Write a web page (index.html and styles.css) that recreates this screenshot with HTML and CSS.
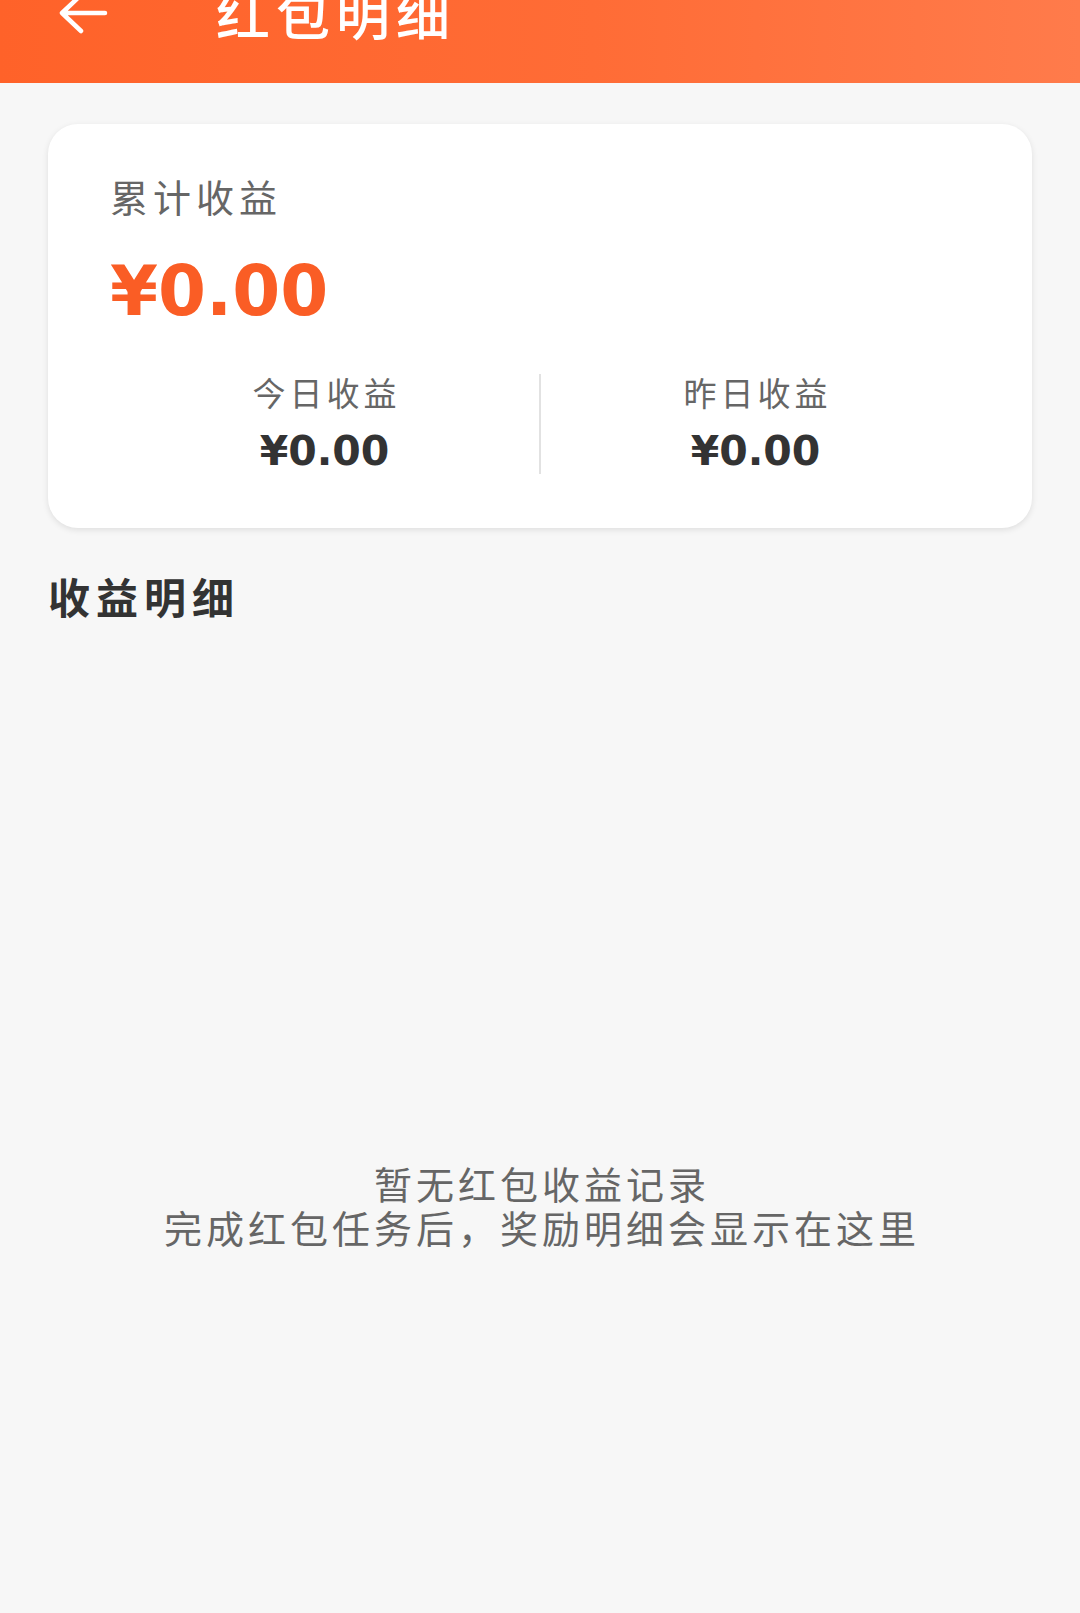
FILE: index.html
```html
<!DOCTYPE html>
<html lang="zh-CN">
<head>
  <meta charset="UTF-8">
  <meta name="viewport" content="width=device-width, initial-scale=1.0">
  <title>红包明细</title>
  <link rel="stylesheet" href="styles.css">
</head>
<body>
  <!-- Top bar -->
  <header class="topbar">
    <div class="topbar-inner">
      <button class="back-btn" aria-label="返回">
        <svg width="50" height="42" viewBox="0 0 50 42" fill="none">
          <path d="M47 21H4M23 3L4 21l19 18" stroke="#fff" stroke-width="4.5" stroke-linecap="round" stroke-linejoin="round"/>
        </svg>
      </button>
      <h1 class="topbar-title">红包明细</h1>
    </div>
  </header>

  <main class="page">
    <!-- Summary card -->
    <section class="summary-card">
      <div class="summary-label">累计收益</div>
      <div class="summary-total">¥0.00</div>

      <div class="summary-stats">
        <div class="stat">
          <div class="stat-label">今日收益</div>
          <div class="stat-value">¥0.00</div>
        </div>
        <div class="stat-divider"></div>
        <div class="stat">
          <div class="stat-label">昨日收益</div>
          <div class="stat-value">¥0.00</div>
        </div>
      </div>
    </section>

    <h2 class="section-title">收益明细</h2>

    <div class="empty-state">
      <p>暂无红包收益记录</p>
      <p>完成红包任务后，奖励明细会显示在这里</p>
    </div>
  </main>
</body>
</html>
```

FILE: styles.css
```css
body {
  font-family: "Noto Sans CJK SC", "Noto Sans", sans-serif;
  margin: 0;
  background-color: #f7f7f7;
  color: #333;
  width: 1080px;
  min-height: 1613px;
}

.topbar {
  height: 83px;
  overflow: hidden;
  background: linear-gradient(90deg, #ff6229 0%, #ff6c36 55%, #ff7b4b 100%);
}

.topbar-inner {
  height: 140px;
  margin-top: -57px;
  display: flex;
  align-items: center;
  padding-left: 58px;
}

.back-btn {
  display: flex;
  padding: 0;
  border: 0;
  background: none;
}

.topbar-title {
  margin: 0 0 0 108px;
  font-size: 54px;
  font-weight: 500;
  line-height: 1;
  letter-spacing: 6px;
  color: #fff;
}

.page {
  padding: 0 48px;
}

.summary-card {
  margin-top: 41px;
  padding: 53px 62px 54px;
  background-color: #fff;
  border-radius: 30px;
  box-shadow: 0 2px 6px rgba(0, 0, 0, 0.1);
}

.summary-label {
  font-size: 38px;
  line-height: 38px;
  letter-spacing: 5px;
  color: #666;
}

.summary-total {
  margin-top: 41px;
  font-family: "DejaVu Sans", sans-serif;
  font-size: 69px;
  font-weight: bold;
  line-height: 70px;
  color: #fa5d25;
}

.summary-stats {
  margin-top: 48px;
  height: 100px;
  display: flex;
  align-items: center;
}

.stat {
  flex: 1;
  text-align: center;
}

.stat-label {
  font-size: 33px;
  line-height: 33px;
  letter-spacing: 4px;
  padding-left: 4px;
  color: #666;
}

.stat-value {
  margin-top: 21px;
  font-family: "DejaVu Sans", sans-serif;
  font-size: 41px;
  font-weight: bold;
  line-height: 42px;
  color: #333;
}

.stat-divider {
  width: 2px;
  height: 100%;
  background-color: #e2e2e2;
}

.section-title {
  margin: 47px 0 0;
  font-size: 42px;
  font-weight: bold;
  line-height: 42px;
  letter-spacing: 6px;
  color: #333;
}

.empty-state {
  padding-top: 544px;
  text-align: center;
  color: #666;
}

.empty-state p {
  margin: 0;
  font-size: 38px;
  line-height: 44px;
  letter-spacing: 4px;
  padding-left: 4px;
}
```
